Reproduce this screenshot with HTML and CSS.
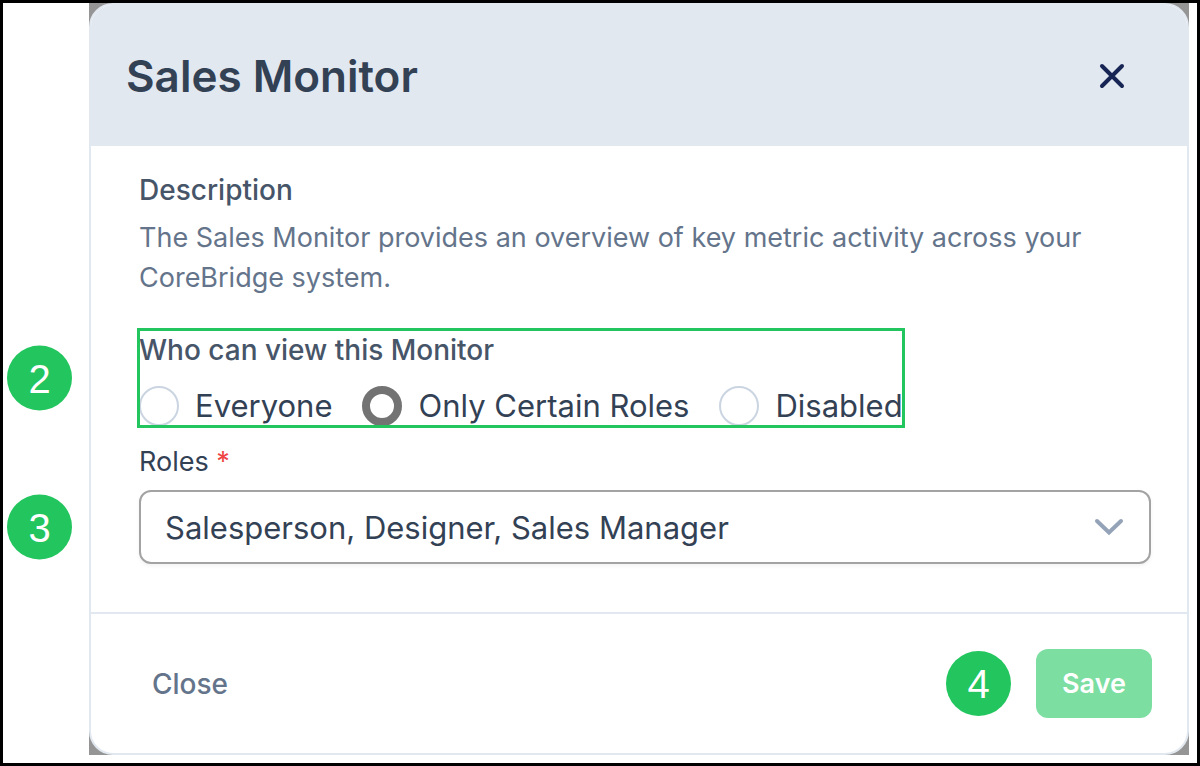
FILE: index.html
```html
<!DOCTYPE html>
<html lang="en">
<head>
    <meta charset="UTF-8">
    <meta name="viewport" content="width=device-width, initial-scale=1.0">
    <title>Sales Monitor</title>
    <link rel="stylesheet" href="styles.css">
</head>
<body>
    <div class="page">
        <div class="backdrop">
            <form class="dialog">
                <header class="dialog-header">
                    <h1>Sales Monitor</h1>
                    <button type="button" class="close-icon" aria-label="Close dialog">
                        <svg width="32" height="32" viewBox="0 0 32 32" fill="none" stroke="currentColor" stroke-width="4" stroke-linecap="round">
                            <path d="M6 6l20 20M26 6L6 26"/>
                        </svg>
                    </button>
                </header>

                <div class="dialog-body">
                    <h2>Description</h2>
                    <p class="description">The Sales Monitor provides an overview of key metric activity across your CoreBridge system.</p>

                    <div class="step">
                        <span class="badge badge-side">2</span>
                        <fieldset class="viewers">
                            <legend>Who can view this Monitor</legend>
                            <div class="options">
                                <label><input type="radio" name="viewers" value="everyone">Everyone</label>
                                <label><input type="radio" name="viewers" value="roles" checked>Only Certain Roles</label>
                                <label><input type="radio" name="viewers" value="disabled">Disabled</label>
                            </div>
                        </fieldset>
                    </div>

                    <label class="roles-label" for="roles">Roles <span class="required">*</span></label>
                    <div class="step select-wrap">
                        <span class="badge badge-side">3</span>
                        <select id="roles">
                            <option>Salesperson, Designer, Sales Manager</option>
                        </select>
                        <svg class="chevron" width="32" height="20" viewBox="0 0 32 20" fill="none" stroke="currentColor" stroke-width="4" stroke-linecap="round">
                            <path d="M4 4l12 11.500L28 4"/>
                        </svg>
                    </div>
                </div>

                <footer class="dialog-footer">
                    <button type="button" class="close-button">Close</button>
                    <span class="badge">4</span>
                    <button type="submit" class="save-button">Save</button>
                </footer>
            </form>
        </div>
    </div>
</body>
</html>
```
FILE: styles.css
```css
*
{
    box-sizing: border-box;
}
body
{
    margin: 0;
    font-family: Inter, 'Liberation Sans', sans-serif;
    font-size: 27px;
    line-height: 40px;
    color: #334155;
}
button, select
{
    font: inherit;
}
.page
{
    display: flex;
    flex-direction: column;
    min-height: 100vh;
    padding: 0 8px 8px 86px;
    border: 3px solid #000;
    background: #fff;
}
.backdrop
{
    background: #959595;
}
.dialog
{
    border: 2px solid #e2e8f0;
    border-radius: 24px;
    background: #fff;
}
.dialog-header
{
    display: flex;
    align-items: center;
    justify-content: space-between;
    padding: 42px 59px 41px 35px;
    border-radius: 22px 22px 0 0;
    background: #e2e8f0;
}
h1
{
    margin: 0;
    font-size: 44px;
    font-weight: 600;
    line-height: 58px;
}
.close-icon
{
    display: flex;
    padding: 0;
    border: 0;
    background: none;
    color: #172554;
}
.dialog-body
{
    padding: 24px 36px 48px 48px;
}
h2, legend
{
    margin: 0;
    padding: 0;
    font-size: 28px;
    font-weight: 500;
    color: #475569;
}
.description
{
    margin: 8px 0 32px;
    color: #64748b;
}
.step
{
    position: relative;
}
.viewers
{
    width: fit-content;
    margin: 0;
    padding: 0;
    border: 0;
    outline: 3px solid #22c55e;
    outline-offset: -1px;
}
.options
{
    display: flex;
    gap: 30px;
    padding-top: 16px;
    font-size: 31px;
}
.options label
{
    display: flex;
    align-items: center;
    gap: 16px;
}
.options input
{
    appearance: none;
    width: 40px;
    height: 40px;
    margin: 0;
    border: 2px solid #cbd5e1;
    border-radius: 50%;
    background: #fff;
}
.options input:checked
{
    border: 8px solid #737373;
}
.roles-label
{
    display: block;
    margin: 16px 0 8px;
}
.required
{
    color: #ef4444;
}
.select-wrap
{
    display: flex;
}
select
{
    appearance: none;
    width: 100%;
    height: 74px;
    padding: 2px 72px 0 24px;
    border: 2px solid #a3a3a3;
    border-radius: 12px;
    background: #fff;
    box-shadow: 0 2px 4px rgba(0, 0, 0, 0.05);
    color: #334155;
    font-size: 31px;
}
.chevron
{
    position: absolute;
    top: 27px;
    right: 26px;
    color: #94a3b8;
    pointer-events: none;
}
.badge
{
    display: flex;
    align-items: center;
    justify-content: center;
    width: 65px;
    height: 65px;
    border-radius: 50%;
    background: #22c55e;
    color: #fff;
    font-family: 'Liberation Sans', sans-serif;
    font-size: 40px;
}
.badge-side
{
    position: absolute;
    top: 50%;
    left: -132px;
    transform: translateY(-50%);
}
.dialog-footer
{
    display: flex;
    align-items: center;
    gap: 25px;
    padding: 35px;
    border-top: 2px solid #e2e8f0;
}
.close-button, .save-button
{
    height: 69px;
    padding: 0 26px;
    border: 0;
    border-radius: 12px;
}
.close-button
{
    margin-right: auto;
    background: none;
    color: #64748b;
    font-size: 28px;
    font-weight: 500;
}
.save-button
{
    background: #7cdea1;
    color: #fff;
    font-weight: 600;
}
```
